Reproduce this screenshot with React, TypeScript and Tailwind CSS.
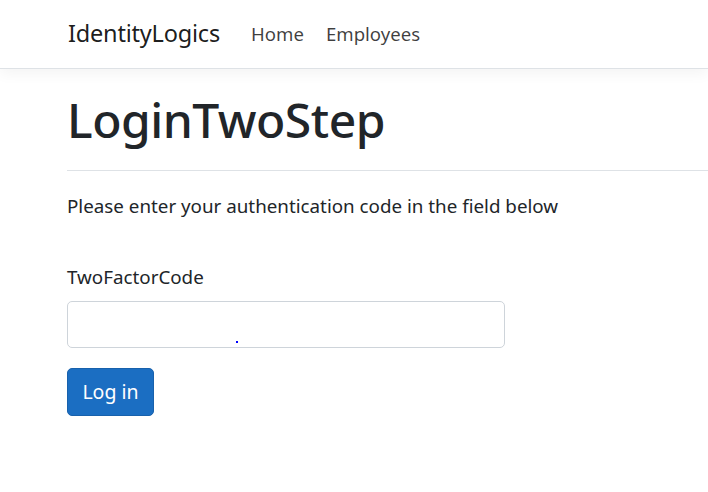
export default function App() {
  return (
    <div className="min-h-[492px] w-[708px] overflow-hidden bg-white text-[#212529] font-['Segoe_UI','Noto_Sans',sans-serif]">
      {/* Navbar */}
      <header className="h-[69px] border-b border-[#dee2e6] bg-white shadow-[0_4px_14px_rgba(0,0,0,0.05)]">
        <nav className="flex h-full items-center pl-[68px]">
          <span className="text-[23.5px] text-black/90 tracking-[-0.2px]">IdentityLogics</span>
          <div className="ml-[31px] flex items-center gap-[22px] text-[18.6px] text-black/75">
            <span>Home</span>
            <span>Employees</span>
          </div>
        </nav>
      </header>

      {/* Main content */}
      <main className="pl-[67px]">
        <h1 className="mt-[22px] text-[48px] font-medium leading-[1.2] tracking-[-0.5px]">LoginTwoStep</h1>
        <hr className="mt-[21px] border-t border-[#dee2e6]" />
        <p className="mt-[21px] text-[18.8px] leading-[1.5]">
          Please enter your authentication code in the field below
        </p>

        <form className="mt-[43px]">
          <label className="block text-[18.8px] leading-[1.5]">TwoFactorCode</label>
          <div className="relative mt-[10px] h-[47px] w-[438px] rounded-[5px] border border-[#ced4da] bg-white">
            <span className="absolute left-[168px] top-[39px] h-[2px] w-[2px] bg-[#0000ff]" />
          </div>
          <button
            type="button"
            className="mt-[20px] h-[48px] w-[87px] rounded-[5px] border border-[#1861ac] bg-[#1b6ec2] text-[19.5px] text-white"
          >
            Log in
          </button>
        </form>
      </main>
    </div>
  );
}
